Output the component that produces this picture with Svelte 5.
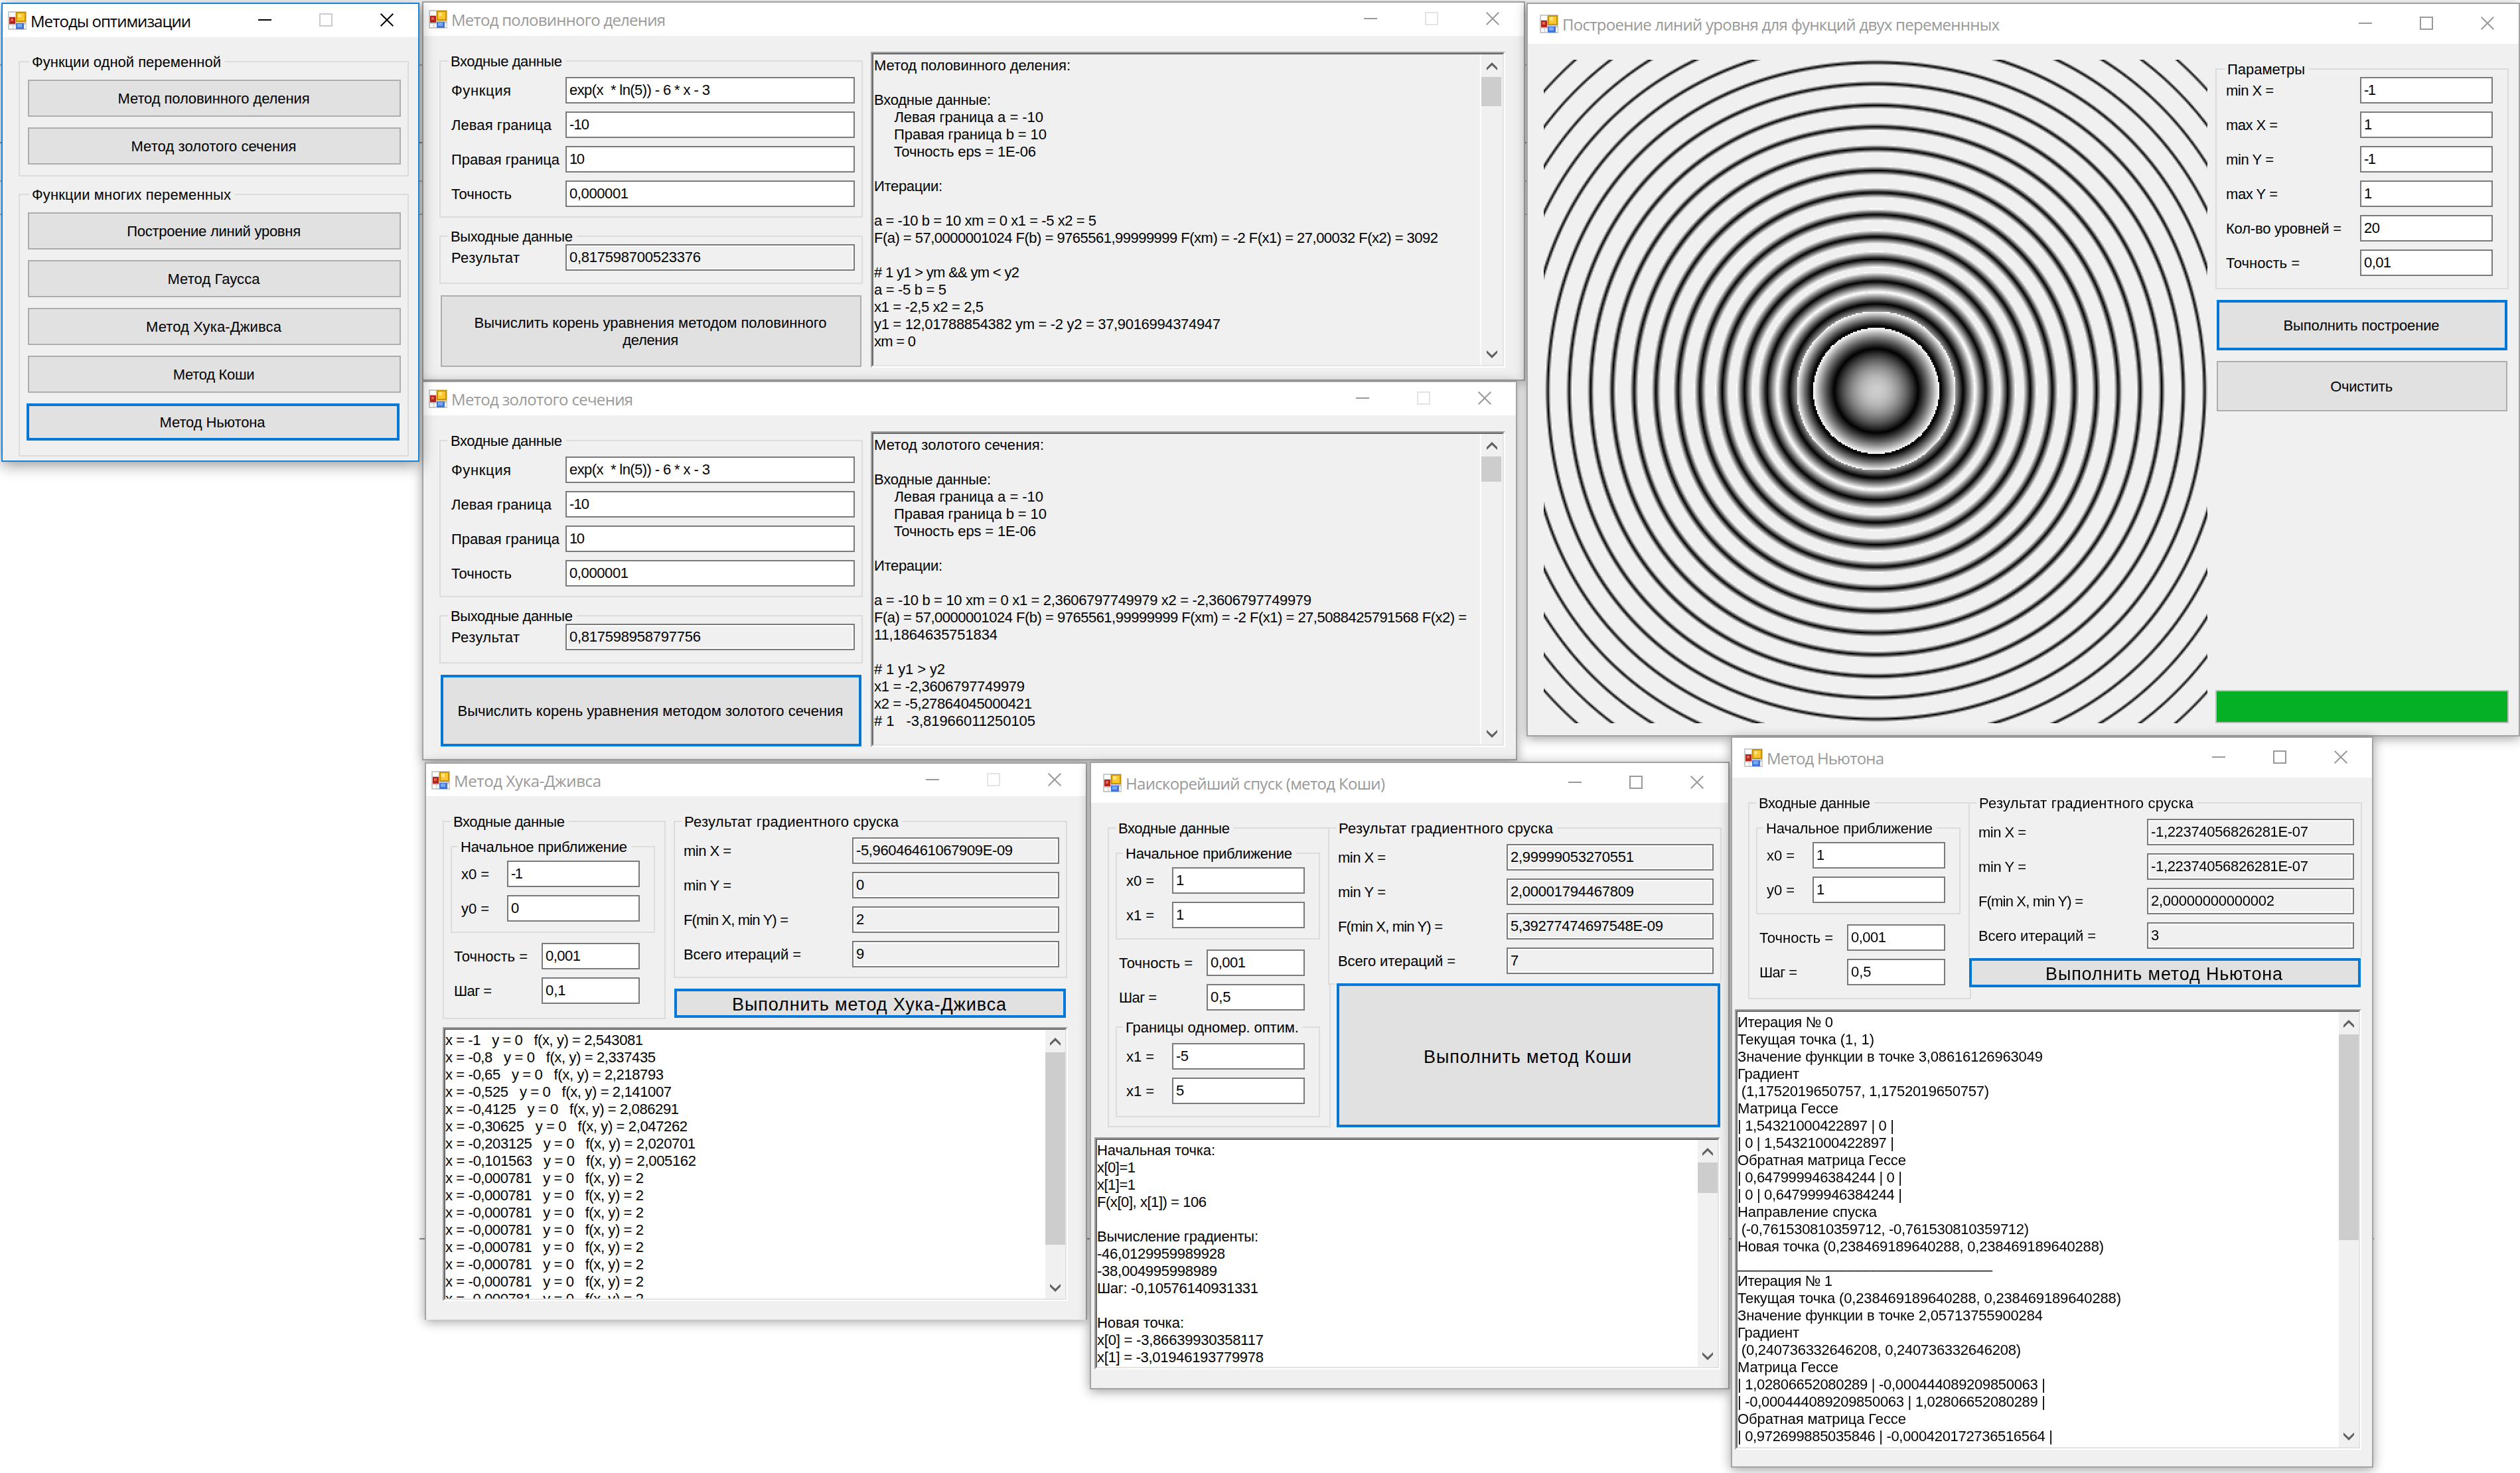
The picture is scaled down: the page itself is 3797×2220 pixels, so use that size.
<script>
  import { onMount } from 'svelte';

  // Spreads the letters of a node so that its text takes up `width` pixels.
  function fit(node, width) {
    if (!width) return;
    const n = [...node.textContent].length;
    const natural = node.getBoundingClientRect().width;
    node.style.letterSpacing = `${(width - natural) / Math.max(n - 1, 1)}px`;
  }

  let plot;

  // Level lines of f(x, y) = ch x + ch y on [-1, 1] x [-1, 1].
  onMount(() => {
    const size = 500;
    const eps = 0.01;
    const levels = [];
    for (let k = 2; k <= 20; k++) {
      levels.push(2 * Math.cosh(0.0895 + 0.048 * (k - 2)));
    }
    const ctx = plot.getContext('2d');
    const img = ctx.createImageData(size, size);
    for (let j = 0; j < size; j++) {
      for (let i = 0; i < size; i++) {
        const f = Math.cosh((i - 250) / 250) + Math.cosh((j - 249) / 250);
        const hit = levels.find((l) => Math.abs(f - l) < eps);
        const g = hit === undefined ? 240 : Math.round((255 * Math.abs(f - hit)) / eps);
        const p = (j * size + i) * 4;
        img.data[p] = img.data[p + 1] = img.data[p + 2] = g;
        img.data[p + 3] = 255;
      }
    }
    ctx.putImageData(img, 0, 0);
  });

  const one = [['Метод половинного деления', 289], ['Метод золотого сечения', 249]];
  const many = [
    ['Построение линий уровня', 262],
    ['Метод Гаусса', 139],
    ['Метод Хука-Дживса', 204],
    ['Метод Коши', 123],
    ['Метод Ньютона', 159]
  ];

  const rootInputs = [
    ['Функция', 90, 'exp(x  * ln(5)) - 6 * x - 3', 212],
    ['Левая граница', 151, '-10', 30],
    ['Правая граница', 163, '10', 23],
    ['Точность', 91, '0,000001', 89]
  ];

  const halfLog = [
    ['Метод половинного деления:', 296], [''],
    ['Входные данные:', 176],
    ['     Левая граница a = -10', 255],
    ['     Правая граница b = 10', 260],
    ['     Точность eps = 1E-06', 244], [''],
    ['Итерации:', 103], [''],
    ['a = -10 b = 10 xm = 0 x1 = -5 x2 = 5', 335],
    ['F(a) = 57,0000001024 F(b) = 9765561,99999999 F(xm) = -2 F(x1) = 27,00032 F(x2) = 3092', 850], [''],
    ['# 1 y1 > ym && ym < y2', 219],
    ['a = -5 b = 5', 109],
    ['x1 = -2,5 x2 = 2,5', 165],
    ['y1 = 12,01788854382 ym = -2 y2 = 37,9016994374947', 522],
    ['xm = 0', 63]
  ];
  const goldLog = [
    ['Метод золотого сечения:', 256], [''],
    ['Входные данные:', 176],
    ['     Левая граница a = -10', 255],
    ['     Правая граница b = 10', 260],
    ['     Точность eps = 1E-06', 244], [''],
    ['Итерации:', 103], [''],
    ['a = -10 b = 10 xm = 0 x1 = 2,3606797749979 x2 = -2,3606797749979', 659],
    ['F(a) = 57,0000001024 F(b) = 9765561,99999999 F(xm) = -2 F(x1) = 27,5088425791568 F(x2) =', 893],
    ['11,1864635751834', 186], [''],
    ['# 1 y1 > y2', 107],
    ['x1 = -2,3606797749979', 227],
    ['x2 = -5,27864045000421', 238],
    ['# 1   -3,81966011250105', 243]
  ];
  const tail = ['x = -0,000781   y = 0   f(x, y) = 2', 299];
  const hookLog = [
    ['x = -1   y = 0   f(x, y) = 2,543081', 298],
    ['x = -0,8   y = 0   f(x, y) = 2,337435', 317],
    ['x = -0,65   y = 0   f(x, y) = 2,218793', 329],
    ['x = -0,525   y = 0   f(x, y) = 2,141007', 341],
    ['x = -0,4125   y = 0   f(x, y) = 2,086291', 352],
    ['x = -0,30625   y = 0   f(x, y) = 2,047262', 365],
    ['x = -0,203125   y = 0   f(x, y) = 2,020701', 377],
    ['x = -0,101563   y = 0   f(x, y) = 2,005162', 378],
    tail, tail, tail, tail, tail, tail, tail, tail
  ];
  const cauchyLog = [
    ['Начальная точка:', 178],
    ['x[0]=1', 58],
    ['x[1]=1', 58],
    ['F(x[0], x[1]) = 106', 165], [''],
    ['Вычисление градиенты:', 243],
    ['-46,0129959989928', 193],
    ['-38,004995998989', 181],
    ['Шаг: -0,10576140931331', 243], [''],
    ['Новая точка:', 131],
    ['x[0] = -3,86639930358117', 251],
    ['x[1] = -3,01946193779978', 251]
  ];
  const newtonLog = [
    ['Итерация № 0', 144],
    ['Текущая точка (1, 1)', 206],
    ['Значение функции в точке 3,08616126963049', 460],
    ['Градиент', 93],
    [' (1,1752019650757, 1,1752019650757)', 379],
    ['Матрица Гессе', 152],
    ['| 1,54321000422897 | 0 |', 236],
    ['| 0 | 1,54321000422897 |', 236],
    ['Обратная матрица Гессе', 254],
    ['| 0,647999946384244 | 0 |', 248],
    ['| 0 | 0,647999946384244 |', 248],
    ['Направление спуска', 210],
    [' (-0,761530810359712, -0,761530810359712)', 439],
    ['Новая точка (0,238469189640288, 0,238469189640288)', 552],
    ['________________________________', 384],
    ['Итерация № 1', 143],
    ['Текущая точка (0,238469189640288, 0,238469189640288)', 578],
    ['Значение функции в точке 2,05713755900284', 460],
    ['Градиент', 93],
    [' (0,240736332646208, 0,240736332646208)', 427],
    ['Матрица Гессе', 152],
    ['| 1,02806652080289 | -0,000444089209850063 |', 464],
    ['| -0,000444089209850063 | 1,02806652080289 |', 464],
    ['Обратная матрица Гессе', 254],
    ['| 0,972699885035846 | -0,000420172736516564 |', 475],
    ['| -0,000420172736516564 | 0,972699885035846 |', 475]
  ];

  const levelInputs = [
    ['min X =', 72, '-1', 18],
    ['max X =', 78, '1', 0],
    ['min Y =', 72, '-1', 18],
    ['max Y =', 78, '1', 0],
    ['Кол-во уровней =', 174, '20', 24],
    ['Точность =', 111, '0,01', 41]
  ];

  const results = (a, b, c, d) => [
    ['min X =', 72, ...a],
    ['min Y =', 72, ...b],
    ['F(min X, min Y) =', 158, ...c],
    ['Всего итераций =', 177, ...d]
  ];
</script>

{#snippet titlebar(text, width, max)}
  <header class="title">
    <svg class="app" viewBox="0 0 28 28">
      <rect width="28" height="28" fill="#c9c9c9" />
      <rect x="2" y="2" width="9" height="6" fill="#fff" />
      <rect x="2" y="21" width="5" height="5" fill="#fff" />
      <rect x="8" y="21" width="4" height="5" fill="#f4f4f4" />
      <rect x="24" y="20" width="3" height="6" fill="#f0f0f0" />
      <rect x="2" y="9" width="9" height="10" fill="#b3261c" />
      <rect x="4" y="11" width="4" height="4" fill="#e0665a" />
      <rect x="12" y="1" width="15" height="15" fill="#c8930c" />
      <rect x="14" y="3" width="11" height="11" fill="#fbc72f" />
      <rect x="15" y="4" width="5" height="5" fill="#ffe384" />
      <rect x="12" y="18" width="12" height="9" fill="#3f74d8" />
      <rect x="14" y="19" width="7" height="5" fill="#79a8f4" />
    </svg>
    <h2><span use:fit={width}>{text}</span></h2>
    <span class="ctl"><svg viewBox="0 0 20 20"><path d="M0 10h20" /></svg></span>
    <span class="ctl" class:off={!max}><svg viewBox="0 0 20 20"><path d="M1 1h18v18H1z" /></svg></span>
    <span class="ctl"><svg viewBox="0 0 20 20"><path d="M.7 .7L19.3 19.3M19.3 .7L.7 19.3" /></svg></span>
  </header>
{/snippet}

{#snippet row(r, ro)}
  <div class="row">
    <span class="lbl"><span use:fit={r[1]}>{r[0]}</span></span>
    <div class="input" class:ro><span use:fit={r[3]}>{r[2]}</span></div>
  </div>
{/snippet}

{#snippet log(lines)}
  <div class="log">
    <div class="inner">
      <div class="lines">
        {#each lines as l}
          <div class="line"><span use:fit={l[1]}>{l[0]}</span></div>
        {/each}
      </div>
      <div class="scroll">
        <svg class="arrow" viewBox="0 0 16 12"><path d="M0 8L8 0L16 8V12L8 4.500L0 12Z" /></svg>
        <div class="thumb"></div>
        <svg class="arrow down" viewBox="0 0 16 12"><path d="M0 4L8 12L16 4V0L8 7.500L0 0Z" /></svg>
      </div>
    </div>
  </div>
{/snippet}

{#snippet rootBody(result, button, lines)}
  <div class="body">
    <div class="side">
      <fieldset class="g-in">
        <legend><span use:fit={168}>Входные данные</span></legend>
        <div class="rows">
          {#each rootInputs as r}{@render row(r, false)}{/each}
        </div>
      </fieldset>
      <fieldset class="g-out">
        <legend><span use:fit={184}>Выходные данные</span></legend>
        <div class="rows">{@render row(['Результат', 103, result, 198], true)}</div>
      </fieldset>
      {@render button()}
    </div>
    {@render log(lines)}
  </div>
{/snippet}

{#snippet halfButton()}
  <button class="big"><span><span use:fit={531}>Вычислить корень уравнения методом половинного</span><br /><span use:fit={84}>деления</span></span></button>
{/snippet}
{#snippet goldButton()}
  <button class="big focus"><span use:fit={581}>Вычислить корень уравнения методом золотого сечения</span></button>
{/snippet}

{#snippet descentBody(start, step, bounds, res, button, buttonWidth, lines)}
  <div class="body">
    <div class="top">
      <fieldset class="g-data">
        <legend><span use:fit={168}>Входные данные</span></legend>
        <fieldset class="g-start">
          <legend><span use:fit={251}>Начальное приближение</span></legend>
          <div class="rows">{#each start as r}{@render row(r, false)}{/each}</div>
        </fieldset>
        <div class="rows small">
          {@render row(['Точность =', 111, '0,001', 53], false)}
          {@render row(['Шаг =', 57, step, 0], false)}
        </div>
        {#if bounds}
          <fieldset class="g-bounds">
            <legend><span use:fit={261}>Границы одномер. оптим.</span></legend>
            <div class="rows">{#each bounds as r}{@render row(r, false)}{/each}</div>
          </fieldset>
        {/if}
      </fieldset>
      <div class="right">
        <fieldset class="g-res">
          <legend><span use:fit={323}>Результат градиентного сруска</span></legend>
          <div class="rows">{#each res as r}{@render row(r, true)}{/each}</div>
        </fieldset>
        <button class="run focus"><span use:fit={buttonWidth}>{button}</span></button>
      </div>
    </div>
    {@render log(lines)}
  </div>
{/snippet}

<main>
  <svg class="backdrop" viewBox="0 0 3797 2220">
    <path d="M0 98H3797M0 273H3797M0 323H3797" stroke="#a9bccb" />
    <path d="M0 215H3797M632 1867H3577" stroke="#8c8c8c" />
  </svg>

  <section class="win w-half root">
    {@render titlebar('Метод половинного деления', 323, false)}
    {@render rootBody('0,817598700523376', halfButton, halfLog)}
  </section>

  <section class="win w-gold root">
    {@render titlebar('Метод золотого сечения', 274, false)}
    {@render rootBody('0,817598958797756', goldButton, goldLog)}
  </section>

  <section class="win w-levels wide">
    {@render titlebar('Построение линий уровня для функций двух переменнных', 659, true)}
    <div class="body">
      <canvas bind:this={plot} width="500" height="500"></canvas>
      <div class="panel">
        <fieldset class="g-params">
          <legend><span use:fit={117}>Параметры</span></legend>
          <div class="rows">
            {#each levelInputs as r}{@render row(r, false)}{/each}
          </div>
        </fieldset>
        <button class="focus"><span use:fit={235}>Выполнить построение</span></button>
        <button><span use:fit={94}>Очистить</span></button>
        <div class="progress"></div>
      </div>
    </div>
  </section>

  <section class="win w-hook descent">
    {@render titlebar('Метод Хука-Дживса', 222, false)}
    {@render descentBody(
      [['x0 =', 42, '-1', 18], ['y0 =', 42, '0', 0]],
      '0,1', null,
      results(['-5,96046461067909E-09', 236], ['0', 0], ['2', 0], ['9', 0]),
      'Выполнить метод Хука-Дживса', 413, hookLog)}
  </section>

  <section class="win w-cauchy descent wide">
    {@render titlebar('Наискорейший спуск (метод Коши)', 391, true)}
    {@render descentBody(
      [['x0 =', 42, '1', 0], ['x1 =', 42, '1', 0]],
      '0,5',
      [['x1 =', 42, '-5', 19], ['x1 =', 42, '5', 0]],
      results(['2,99999053270551', 186], ['2,00001794467809', 186], ['5,39277474697548E-09', 230], ['7', 0]),
      'Выполнить метод Коши', 313, cauchyLog)}
  </section>

  <section class="win w-newton descent wide">
    {@render titlebar('Метод Ньютона', 177, true)}
    {@render descentBody(
      [['x0 =', 42, '1', 0], ['y0 =', 42, '1', 0]],
      '0,5', null,
      results(['-1,22374056826281E-07', 237], ['-1,22374056826281E-07', 237], ['2,00000000000002', 186], ['3', 0]),
      'Выполнить метод Ньютона', 357, newtonLog)}
  </section>

  <section class="win w-menu active">
    {@render titlebar('Методы оптимизации', 242, false)}
    <div class="body">
      <fieldset class="g-one">
        <legend><span use:fit={285}>Функции одной переменной</span></legend>
        {#each one as [t, w]}<button><span use:fit={w}>{t}</span></button>{/each}
      </fieldset>
      <fieldset class="g-many">
        <legend><span use:fit={300}>Функции многих переменных</span></legend>
        {#each many as [t, w], i}<button class:focus={i === 4}><span use:fit={w}>{t}</span></button>{/each}
      </fieldset>
    </div>
  </section>
</main>

<style>
  :global(body) {
    background: #fff;
    overflow: hidden;
  }
  main {
    position: relative;
    width: 3797px;
    height: 2220px;
    overflow: hidden;
    background: #fff;
    font: 22px/26px 'Liberation Sans', Arial, sans-serif;
    color: #000;
  }
  main :global(*) {
    box-sizing: border-box;
  }
  .backdrop {
    display: block;
    width: 3797px;
    height: 2220px;
    stroke-width: 2;
  }

  /* windows */
  .win {
    position: absolute;
    display: flex;
    flex-direction: column;
    background: #f0f0f0;
    border: 2px solid #a3a3a3;
    box-shadow: 0 3px 16px rgba(0, 0, 0, 0.38);
  }
  .win.active {
    border-color: #1883d7;
    box-shadow: 0 4px 22px rgba(0, 0, 0, 0.45);
  }
  .w-menu { left: 2px; top: 4px; width: 630px; height: 692px; }
  .w-half { left: 636px; top: 2px; width: 1662px; height: 572px; }
  .w-gold { left: 636px; top: 574px; width: 1650px; height: 572px; }
  .w-levels { left: 2300px; top: 4px; width: 1497px; height: 1106px; }
  .w-hook { left: 640px; top: 1149px; width: 998px; height: 840px; border-bottom: 0; }
  .w-cauchy { left: 1642px; top: 1148px; width: 964px; height: 946px; }
  .w-newton { left: 2608px; top: 1110px; width: 968px; height: 1102px; }

  .title {
    display: flex;
    align-items: center;
    height: 50px;
    flex: none;
    padding: 0 1px 0 8px;
    background: #fff;
  }
  .wide .title { height: 60px; padding-left: 18px; }
  .w-hook .title { height: 49px; }
  .app { width: 28px; height: 28px; flex: none; }
  h2 {
    flex: 1;
    margin: 2px 0 0;
    padding-left: 6px;
    font: 24px/34px 'Open Sans', 'Noto Sans', sans-serif;
    color: #999;
    white-space: pre;
  }
  .active h2 { color: #000; }
  .ctl {
    display: flex;
    justify-content: center;
    width: 92px;
    margin-top: -2px;
    color: #999;
  }
  .active .ctl { color: #000; }
  .ctl.off { color: #e4e4e4; }
  .active .ctl.off { color: #ccc; }
  .ctl svg {
    width: 20px;
    height: 20px;
    fill: none;
    stroke: currentColor;
    stroke-width: 2;
  }

  /* group boxes and rows */
  fieldset {
    min-width: 0;
    margin: 0;
    padding: 0;
    border: 2px solid #dcdcdc;
    background: #f0f0f0;
  }
  legend {
    height: 26px;
    margin-left: 12px;
    padding: 0 6px 0 4px;
    line-height: 28px;
    white-space: pre;
    background: #f0f0f0;
  }
  .rows {
    display: flex;
    flex-direction: column;
    gap: 12px;
  }
  .row {
    display: flex;
    justify-content: space-between;
    align-items: center;
    height: 40px;
    white-space: pre;
  }
  .lbl { padding-top: 2px; }
  .input {
    display: flex;
    align-items: center;
    height: 40px;
    padding: 0 0 0 4px;
    border: 2px solid #7a7a7a;
    background: #fff;
  }
  .input.ro {
    background: #f0f0f0;
    box-shadow: inset 0 0 0 2px #fff;
  }

  button {
    display: flex;
    align-items: center;
    justify-content: center;
    width: 100%;
    margin: 0;
    padding: 2px 2px 0 0;
    font: inherit;
    color: #000;
    text-align: center;
    white-space: pre;
    background: #e1e1e1;
    border: 2px solid #adadad;
    border-radius: 0;
  }
  button.focus { border: 4px solid #0078d7; }

  /* text logs */
  .log {
    flex: none;
    border: 2px solid;
    border-color: #a0a0a0 #fff #fff #a0a0a0;
  }
  .inner {
    display: flex;
    height: 100%;
    border: 2px solid;
    border-color: #696969 #e3e3e3 #e3e3e3 #696969;
    background: #fff;
  }
  .lines {
    flex: 1;
    min-width: 0;
    overflow: hidden;
    padding: 3px 0 0 0;
    white-space: pre;
  }
  .line { height: 26px; }
  .scroll {
    display: flex;
    flex-direction: column;
    align-items: center;
    flex: none;
    width: 30px;
    padding: 12px 0 10px;
    background: #f0f0f0;
  }
  .arrow { width: 16px; height: 12px; fill: #606060; flex: none; }
  .down { margin-top: auto; }
  .thumb {
    align-self: stretch;
    margin-top: 10px;
    background: #cdcdcd;
  }

  /* main menu */
  .w-menu .body { padding: 24px 14px 0 24px; }
  .g-one, .g-many {
    width: 588px;
    padding: 14px 12px 0;
  }
  .g-one { height: 186px; }
  .g-many { height: 408px; margin-top: 14px; }
  .w-menu legend { margin-left: 2px; }
  .w-menu button { width: 562px; height: 56px; margin-bottom: 16px; }
  .w-menu button.focus { margin-left: -2px; }

  /* root-finding windows */
  .root .body {
    display: flex;
    gap: 12px;
    padding: 25px 0 0 24px;
  }
  .root .side { width: 638px; }
  .root legend { margin-left: 11px; }
  .root .rows { padding: 11px 10px 0 16px; }
  .root .input { width: 436px; }
  .g-in { height: 249px; }
  .g-out { height: 85px; margin-top: 15px; }
  .g-out .rows { padding-top: 0; margin-top: -1px; }
  .big { width: 634px; height: 108px; margin: 17px 0 0 2px; }
  .root .log { width: 956px; height: 476px; margin-top: -1px; }
  .root .inner { background: #f0f0f0; }
  .root .lines { padding: 4px 0 0 1px; }
  .root .scroll { width: 34px; border-left: 2px solid #fff; }
  .root .thumb { width: 30px; align-self: flex-start; height: 44px; }
  .w-gold .root .thumb { height: 38px; }

  /* level lines window */
  .w-levels .body {
    display: flex;
    gap: 12px;
    padding: 24px 0 0 24px;
  }
  canvas { width: 1000px; height: 1000px; image-rendering: pixelated; }
  .panel {
    display: flex;
    flex-direction: column;
    width: 442px;
    height: 1000px;
  }
  .g-params { flex: none; height: 345px; margin-top: 1px; }
  .g-params .rows { padding: 0 22px 0 14px; }
  .g-params .rows { margin-top: -1px; }
  .g-params .input { width: 200px; }
  .panel button { width: 438px; height: 76px; margin: 16px 0 0 2px; }
  .progress {
    height: 50px;
    margin-top: auto;
    background: #06b025;
    border: 2px solid #bcbcbc;
  }

  /* descent windows */
  .top { display: flex; }
  .g-data { width: 336px; padding: 12px 0 0 10px; }
  .g-start > legend, .g-bounds > legend, .g-res > legend { margin-left: 10px; }
  .g-data > legend { margin-left: 0; }
  .g-start, .g-bounds { width: 308px; padding: 8px 21px 0 14px; }
  .g-start > legend, .g-bounds > legend { margin-left: -5px; }
  .g-start { height: 143px; }
  .g-bounds { height: 149px; margin-top: 12px; padding-top: 11px; }
  .g-start .input, .g-bounds .input { width: 200px; }
  .small { margin-top: 15px; padding: 0 37px 0 5px; }
  .small .input { width: 148px; }
  .g-res { width: 593px; height: 249px; }
  .g-res .rows { padding: 11px 10px 0 13px; }
  .g-res .input { width: 312px; }
  .run { font-size: 27px; line-height: 32px; padding-top: 4px; }

  .w-hook .body { padding: 25px 0 0 25px; }
  .w-hook .g-data { height: 311px; }
  .w-hook .right { margin-left: 12px; }
  .w-hook .run { width: 590px; height: 44px; margin: 16px 0 0 1px; }
  .w-hook .log { width: 942px; height: 413px; margin-top: 12px; }
  .w-hook .thumb { height: 290px; }

  .w-cauchy .body { padding: 25px 0 0 5px; }
  .w-cauchy .top, .w-newton .top { padding-left: 20px; }
  .w-cauchy .g-data { height: 464px; }
  .w-cauchy .right, .w-newton .right { margin-left: -4px; }
  .w-cauchy .run {
    width: 578px;
    height: 217px;
    margin: -2px 0 0 13px;
    outline: 2px solid #f0f0f0;
  }
  .w-cauchy .log { width: 943px; height: 350px; margin-top: 15px; }
  .w-cauchy .thumb { height: 46px; }

  .w-newton .body { padding: 25px 0 0 4px; }
  .w-newton .g-data { height: 309px; }
  .w-newton .run {
    width: 590px;
    height: 44px;
    margin: -2px 0 0 1px;
    outline: 2px solid #f0f0f0;
  }
  .w-newton .log { width: 944px; height: 664px; margin-top: 15px; }
  .w-newton .thumb { height: 310px; }
  .w-gold .thumb { height: 38px; }
</style>
